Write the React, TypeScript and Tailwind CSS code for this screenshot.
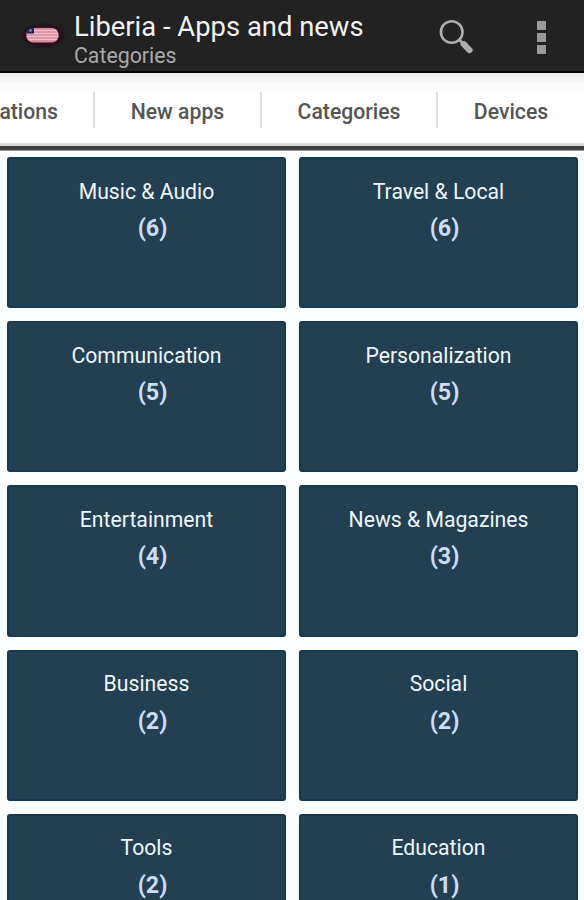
import clsx from "clsx";

interface Category {
  name: string;
  count: number;
}

const TABS = [
  { label: "ations", className: "w-[95px] justify-end pr-[35px]" },
  { label: "New apps", className: "w-[167px] justify-center" },
  { label: "Categories", className: "w-[176px] justify-center" },
  { label: "Devices", className: "w-[146px] justify-center" },
];

const CATEGORIES: Category[] = [
  { name: "Music & Audio", count: 6 },
  { name: "Travel & Local", count: 6 },
  { name: "Communication", count: 5 },
  { name: "Personalization", count: 5 },
  { name: "Entertainment", count: 4 },
  { name: "News & Magazines", count: 3 },
  { name: "Business", count: 2 },
  { name: "Social", count: 2 },
  { name: "Tools", count: 2 },
  { name: "Education", count: 1 },
];

function FlagIcon() {
  return (
    <svg width="46" height="30" viewBox="0 0 46 30" className="shrink-0">
      <defs>
        <clipPath id="flag">
          <rect x="6.5" y="8" width="32" height="14.5" rx="6.5" />
        </clipPath>
        <filter id="glow" x="-20%" y="-30%" width="140%" height="160%">
          <feGaussianBlur stdDeviation="1.4" />
        </filter>
      </defs>
      <ellipse cx="23" cy="15.5" rx="20" ry="10.5" fill="#170a12" filter="url(#glow)" />
      <ellipse cx="22.5" cy="15.2" rx="17.5" ry="8.5" fill="#560a2c" filter="url(#glow)" />
      <g clipPath="url(#flag)">
        <rect x="6" y="7" width="33" height="16" fill="#d98a9d" />
        <path d="M6 10.5h33M6 13.5h33M6 16.5h33M6 19.5h33" stroke="#ecc0cb" strokeWidth="1.3" />
        <rect x="6" y="7" width="8" height="6.5" fill="#14245a" />
        <rect x="9.5" y="9.5" width="2" height="2" fill="#9db4dc" />
      </g>
    </svg>
  );
}

function SearchIcon() {
  return (
    <svg width="36" height="36" viewBox="0 0 36 36" fill="none" stroke="#adadad">
      <circle cx="12.7" cy="13" r="10.8" strokeWidth="2.6" />
      <path d="M20.5 21l4 4" strokeWidth="3" />
      <path d="M24.8 25.2l5.7 5.9" strokeWidth="6.2" strokeLinecap="round" />
    </svg>
  );
}

function Header() {
  return (
    <header className="flex h-[73px] shrink-0 items-start border-b-2 border-black bg-[#222222]">
      <div className="ml-5 mt-5">
        <FlagIcon />
      </div>
      <div className="ml-2 flex-1 whitespace-nowrap">
        <h1 className="mt-[11px] text-[27.4px] leading-8 text-[#f1f1f1]">Liberia - Apps and news</h1>
        <p className="text-[21.3px] leading-[26px] text-[#a9a9a9]">Categories</p>
      </div>
      <button className="mr-[62px] mt-[19px]" aria-label="Search">
        <SearchIcon />
      </button>
      <button className="mr-[38px] mt-[21px] flex flex-col gap-[3px]" aria-label="More options">
        <span className="size-[9px] bg-[#999999]" />
        <span className="size-[9px] bg-[#999999]" />
        <span className="size-[9px] bg-[#999999]" />
      </button>
    </header>
  );
}

function TabBar() {
  return (
    <nav className="flex h-[70px] shrink-0 items-center bg-linear-to-b from-[#e9e9e9] via-[#fbfbfb] via-15% to-white to-30% pt-[3px]">
      {TABS.map((tab, i) => (
        <div
          key={tab.label}
          className={clsx(
            "flex h-9 shrink-0 items-center whitespace-nowrap pt-1 text-[21.2px] font-medium text-[#555555]",
            i < TABS.length - 1 && "border-r-2 border-[#dcdcdc]",
            tab.className,
          )}
        >
          {tab.label}
        </div>
      ))}
    </nav>
  );
}

function CategoryCard({ name, count }: Category) {
  return (
    <div className="flex h-[151.2px] flex-col items-center rounded-[3px] border-2 border-[#153950] bg-[#234053] pt-[18.5px]">
      <span className="whitespace-nowrap text-[21.2px] leading-7 text-[#eef5f8]">{name}</span>
      <span className="ml-3 mt-[7.5px] text-[23.3px] font-bold leading-[30px] text-[#ccdcf5]">({count})</span>
    </div>
  );
}

export default function App() {
  return (
    <div className="flex h-[900px] w-[584px] flex-col overflow-hidden bg-[#fdfffe] font-['Roboto',sans-serif]">
      <Header />
      <TabBar />
      <div className="h-2 shrink-0 border-b border-t-[3px] border-b-[#999999] border-t-[#d9d9d9] bg-[#3c3c3c]" />
      <main className="grid grid-cols-2 gap-x-[13px] gap-y-[13px] pl-[7px] pr-[6px] pt-[6px]">
        {CATEGORIES.map((category) => (
          <CategoryCard key={category.name} {...category} />
        ))}
      </main>
    </div>
  );
}
